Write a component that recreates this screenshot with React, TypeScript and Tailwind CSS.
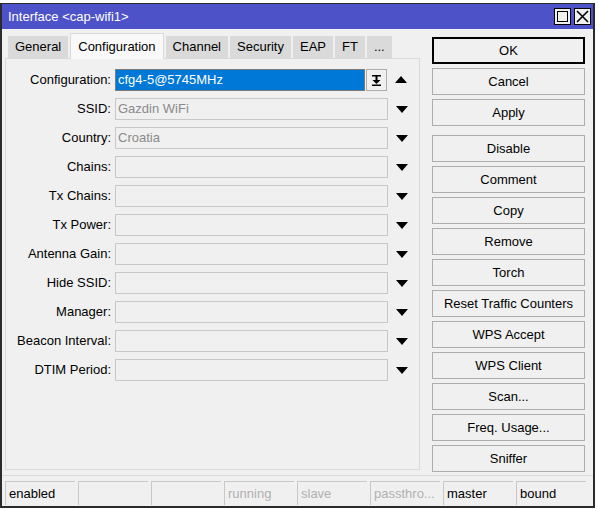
import React from 'react';

const fields = [
  { label: 'Configuration:', value: 'cfg4-5@5745MHz', active: true },
  { label: 'SSID:', value: 'Gazdin WiFi' },
  { label: 'Country:', value: 'Croatia' },
  { label: 'Chains:', value: '' },
  { label: 'Tx Chains:', value: '' },
  { label: 'Tx Power:', value: '' },
  { label: 'Antenna Gain:', value: '' },
  { label: 'Hide SSID:', value: '' },
  { label: 'Manager:', value: '' },
  { label: 'Beacon Interval:', value: '' },
  { label: 'DTIM Period:', value: '' },
];

const tabs = ['General', 'Configuration', 'Channel', 'Security', 'EAP', 'FT', '...'];

const topButtons = ['Cancel', 'Apply'];
const moreButtons = [
  'Disable', 'Comment', 'Copy', 'Remove', 'Torch', 'Reset Traffic Counters',
  'WPS Accept', 'WPS Client', 'Scan...', 'Freq. Usage...', 'Sniffer',
];

const status = [
  { text: 'enabled', dim: false },
  { text: '', dim: false },
  { text: '', dim: false },
  { text: 'running', dim: true },
  { text: 'slave', dim: true },
  { text: 'passthro...', dim: true },
  { text: 'master', dim: false },
  { text: 'bound', dim: false },
];

function Arrow({ up }: { up?: boolean }) {
  return (
    <svg width="12" height="8" viewBox="0 0 12 8" className="shrink-0">
      {up ? <polygon points="0,7 12,7 6,0" fill="#000" /> : <polygon points="0,1 12,1 6,8" fill="#000" />}
    </svg>
  );
}

function WinButton({ children, primary }: { children: React.ReactNode; primary?: boolean }) {
  return (
    <div
      className={`h-[27px] w-[153px] flex items-center justify-center bg-[#f0f0f0] text-[13px] text-black ${
        primary ? 'border-2 border-black' : 'border border-[#adadad]'
      }`}
    >
      {children}
    </div>
  );
}

export default function App() {
  return (
    <div className="w-[598px] h-[509px] bg-white pt-[3px] font-['Liberation_Sans',Arial,sans-serif]">
      <div className="w-[595px] h-[505px] border-2 border-[#2b2b2b] border-t-[1px] bg-[#f0f0f0] flex flex-col">
        {/* Title bar */}
        <div className="h-[25px] bg-[#4e52c8] flex items-center justify-between pl-[6px] pr-[2px]">
          <span className="text-white text-[13px]">Interface &lt;cap-wifi1&gt;</span>
          <div className="flex gap-[3px]">
            <div className="w-[17px] h-[17px] bg-[#f0f0f0] border border-black flex items-center justify-center">
              <div className="w-[11px] h-[11px] border border-black" />
            </div>
            <div className="w-[17px] h-[17px] bg-[#f0f0f0] border border-black flex items-center justify-center">
              <svg width="13" height="13" viewBox="0 0 13 13">
                <path d="M1 1 L12 12 M12 1 L1 12" stroke="#000" strokeWidth="1.6" />
              </svg>
            </div>
          </div>
        </div>

        <div className="flex flex-1 pl-[3px] pt-[4px]">
          {/* Left: tabs + panel */}
          <div className="w-[415px] flex flex-col">
            <div className="flex items-end h-[25px] gap-[2px] pl-[3px]">
              {tabs.map((t) =>
                t === 'Configuration' ? (
                  <div
                    key={t}
                    className="h-[26px] px-[7px] bg-[#f9f9f9] border border-b-0 border-[#d9d9d9] flex items-center text-[13px] text-black relative top-[1px] z-10"
                  >
                    {t}
                  </div>
                ) : (
                  <div
                    key={t}
                    className="h-[22px] px-[7px] bg-[#dadada] flex items-center text-[13px] text-black"
                  >
                    {t}
                  </div>
                )
              )}
            </div>
            <div className="h-[412px] border border-[#d9d9d9] bg-[#f0f0f0] pt-[10px] flex flex-col gap-[7px]">
              {fields.map((f) => (
                <div key={f.label} className="flex items-center h-[22px]">
                  <div className="w-[109px] text-right text-[13px] text-black pr-[4px]">{f.label}</div>
                  {f.active ? (
                    <>
                      <div className="w-[250px] h-[22px] bg-[#0078d7] border border-[#7a7a7a] text-white text-[13px] flex items-center px-[2px]">
                        {f.value}
                      </div>
                      <div className="w-[21px] h-[22px] ml-[1px] border border-[#adadad] bg-[#f0f0f0] flex items-center justify-center">
                        <svg width="9" height="11" viewBox="0 0 9 11">
                          <rect x="0" y="0" width="9" height="1.5" fill="#000" />
                          <rect x="3.5" y="1" width="2" height="5" fill="#000" />
                          <polygon points="0.5,5 8.5,5 4.5,9" fill="#000" />
                          <rect x="0" y="9.5" width="9" height="1.5" fill="#000" />
                        </svg>
                      </div>
                    </>
                  ) : (
                    <div className="w-[273px] h-[22px] border border-[#c8c8c8] bg-[#f0f0f0] text-[#8a8a8a] text-[13px] flex items-center px-[2px]">
                      {f.value}
                    </div>
                  )}
                  <div className="ml-[8px]">
                    <Arrow up={f.active} />
                  </div>
                </div>
              ))}
            </div>
          </div>

          {/* Right: buttons */}
          <div className="ml-[12px] pt-[4px] flex flex-col">
            <WinButton primary>OK</WinButton>
            <div className="flex flex-col gap-[4px] mt-[4px]">
              {topButtons.map((b) => (
                <WinButton key={b}>{b}</WinButton>
              ))}
            </div>
            <div className="flex flex-col gap-[4px] mt-[9px]">
              {moreButtons.map((b) => (
                <WinButton key={b}>{b}</WinButton>
              ))}
            </div>
          </div>
        </div>

        {/* Status bar */}
        <div className="flex gap-[3px] pl-[3px] pb-[1px] border-t border-[#d9d9d9] pt-[5px]">
          {status.map((s, i) => (
            <div
              key={i}
              className={`w-[70px] h-[24px] border-l border-t border-[#c8c8c8] flex items-center px-[3px] text-[13px] overflow-hidden whitespace-nowrap ${
                s.dim ? 'text-[#b0b0b0]' : 'text-black'
              }`}
            >
              {s.text}
            </div>
          ))}
        </div>
      </div>
    </div>
  );
}
